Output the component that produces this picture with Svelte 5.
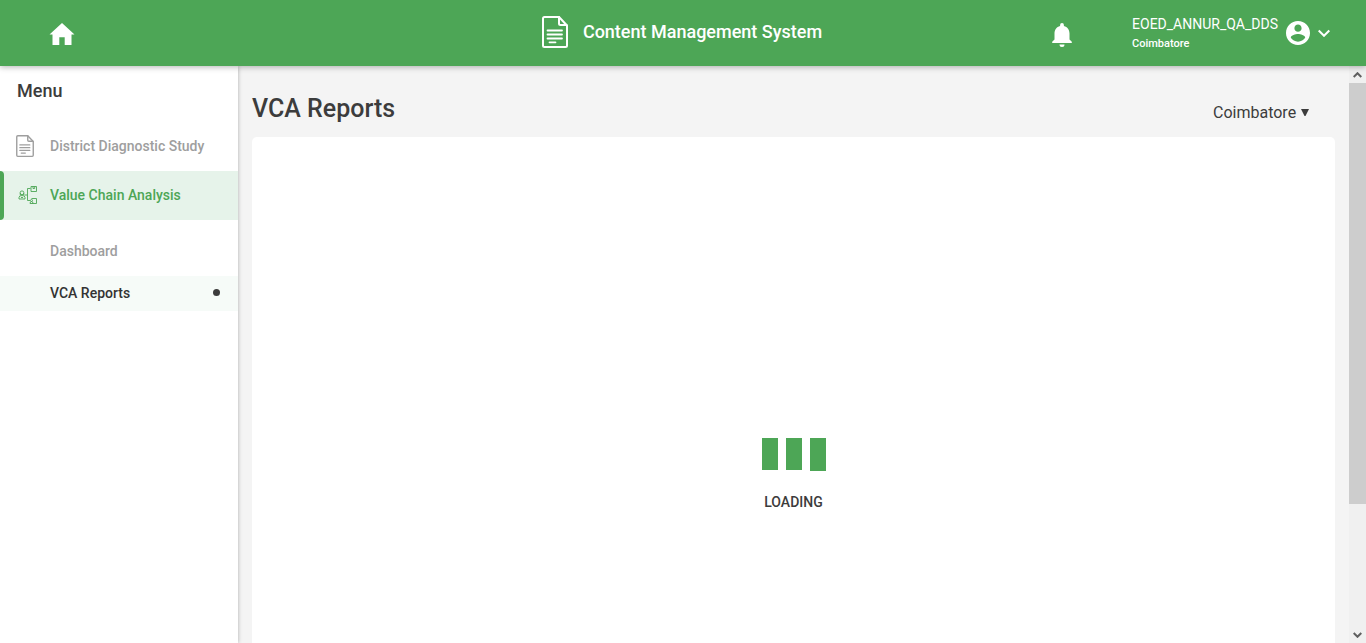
<script>
  let district = $state('Coimbatore');
  const links = [
    { label: 'Dashboard', active: false },
    { label: 'VCA Reports', active: true }
  ];
</script>

{#snippet documentIcon()}
  <svg class="doc" viewBox="0 0 26 32" fill="none" stroke="currentColor" stroke-width="2" stroke-linejoin="round" stroke-linecap="round" aria-hidden="true">
    <path d="M2.500 1H17L25 9.500V29.500Q25 31 23.500 31H2.500Q1 31 1 29.500V2.500Q1 1 2.500 1Z" />
    <path d="M17 1V7.500Q17 9 18.500 9H24.500" />
    <path d="M5.500 14.500H20M5.500 18.500H20M5.500 22.500H20M7.500 26.300H13.500" stroke-width="1.800" />
  </svg>
{/snippet}

<div class="page">
  <header>
    <a class="home" href="#home" aria-label="Home">
      <svg viewBox="0 0 26 22" fill="currentColor" aria-hidden="true"><path d="M13 0L0.500 11.500H3.500V22H10.300V14.200H15.700V22H22.500V11.500H25.500Z" /></svg>
    </a>
    <div class="brand">
      {@render documentIcon()}
      <span>Content Management System</span>
    </div>
    <div class="account">
      <button class="bell" aria-label="Notifications">
        <svg viewBox="0 0 20 24" fill="currentColor" aria-hidden="true"><path d="M10 24a2.500 2.500 0 0 0 2.500-2.500h-5A2.500 2.500 0 0 0 10 24ZM17.500 16.500V10.500c0-3.700-2-6.700-5.600-7.600V2a1.900 1.900 0 0 0-3.800 0v.9C4.500 3.800 2.500 6.800 2.500 10.500v6L.2 18.800V20h19.600v-1.200Z" /></svg>
      </button>
      <button class="user">
        <span class="names"><span class="name">EOED_ANNUR_QA_DDS</span><span class="place">Coimbatore</span></span>
        <svg class="avatar" viewBox="2 2 20 20" fill="currentColor" aria-hidden="true"><path d="M12 2C6.480 2 2 6.480 2 12s4.480 10 10 10 10-4.480 10-10S17.520 2 12 2zm0 3c1.660 0 3 1.340 3 3s-1.340 3-3 3-3-1.340-3-3 1.340-3 3-3zm0 14.200c-2.500 0-4.710-1.280-6-3.220.030-1.990 4-3.080 6-3.080 1.990 0 5.970 1.090 6 3.080-1.290 1.940-3.500 3.220-6 3.220z" /></svg>
        <svg class="chevron" viewBox="0 0 12 8" fill="none" stroke="currentColor" stroke-width="2" aria-hidden="true"><path d="M.7 1.500L6 6.800L11.300 1.500" /></svg>
      </button>
    </div>
  </header>

  <div class="body">
    <aside>
      <h2>Menu</h2>
      <nav>
        <a class="item" href="#district">{@render documentIcon()}<span>District Diagnostic Study</span></a>
        <a class="item current" href="#chain">
          <svg class="chain" viewBox="0 0 20 20" fill="none" stroke="currentColor" stroke-width="0.900" aria-hidden="true">
            <circle cx="4" cy="7.800" r="1.900" />
            <path d="M1 14v-1.500q0-2 3-2t3 2V14ZM2.300 10.300V8M5.700 10.300V8M3 12.500h2" />
            <path d="M6.500 10H9.500M12.500 3.500H9.500V15.500H12" />
            <path d="M13 1.500h5.500V6.500H13ZM15 1.500v2h1.700v-2" />
            <path d="M13.500 13.500h5V18.500h-4" />
            <circle cx="13.500" cy="15.500" r="1" />
            <path d="M12 18.500q0-2 1.500-2t1.500 2Z" />
          </svg>
          <span>Value Chain Analysis</span>
        </a>
        <div class="sub">
          {#each links as link}
            <a class:active={link.active} href="#{link.label}">{link.label}{#if link.active}<i></i>{/if}</a>
          {/each}
        </div>
      </nav>
    </aside>

    <main>
      <div class="heading">
        <h1>VCA Reports</h1>
        <label>
          <select bind:value={district} aria-label="District"><option>Coimbatore</option></select>
          <svg viewBox="0 0 8 7" fill="currentColor" aria-hidden="true"><path d="M0 0H8L4.500 7H3.500Z" /></svg>
        </label>
      </div>
      <section>
        <div class="bars"><i></i><i></i><i></i></div>
        <p>LOADING</p>
      </section>
    </main>

    <div class="scroll">
      <button aria-label="Scroll up"><svg viewBox="0 0 9 6" fill="none" stroke="currentColor" stroke-width="2"><path d="M.7 5L4.500 1.200L8.300 5" /></svg></button>
      <div class="track"><div class="thumb"></div></div>
      <button aria-label="Scroll down"><svg viewBox="0 0 9 6" fill="none" stroke="currentColor" stroke-width="2"><path d="M.7 1L4.500 4.800L8.300 1" /></svg></button>
    </div>
  </div>
</div>

<style>
  :global(body) { font-family: Roboto, "Liberation Sans", sans-serif; color: #3c3c3c; }
  * { box-sizing: border-box; }
  svg { display: block; flex: none; }
  a { color: inherit; text-decoration: none; }
  button { font: inherit; color: inherit; background: none; border: 0; padding: 0; cursor: pointer; }
  h1, h2, p { margin: 0; font-weight: 500; }

  .page { height: 100vh; display: flex; flex-direction: column; overflow: hidden; background: #f4f4f4; }
  header {
    flex: none; height: 66px; display: grid; grid-template-columns: 1fr auto 1fr; align-items: center;
    background: #4da656; color: #fff; z-index: 2; box-shadow: 0 1px 6px rgba(0, 0, 0, 0.3);
  }
  .home { justify-self: start; margin-left: 49px; padding-top: 2px; }
  .home svg { width: 26px; height: 22px; }
  .brand { display: flex; align-items: center; gap: 15px; padding: 0 2px 2px 0; font-size: 18px; line-height: 24px; font-weight: 500; }
  .doc { width: 26px; height: 32px; }
  .account { justify-self: end; display: flex; align-items: center; gap: 60px; padding-right: 36px; }
  .bell { padding-top: 4px; }
  .bell svg { width: 20px; height: 24px; }
  .user { display: flex; align-items: center; gap: 8px; text-align: left; }
  .names { display: flex; flex-direction: column; }
  .name { font-size: 14px; line-height: 20px; }
  .place { font-size: 11px; line-height: 20px; font-weight: 500; }
  .names { padding-top: 2px; }
  .avatar { width: 24px; height: 24px; }
  .chevron { width: 12px; height: 8px; }

  .body { flex: 1; min-height: 0; display: flex; }
  aside { flex: none; width: 238px; background: #fff; box-shadow: 0 0 4px rgba(0, 0, 0, 0.3); }
  h2 { font-size: 18px; line-height: 24px; padding: 13px 17px 19px; }
  .item { display: flex; align-items: center; gap: 16px; height: 49px; padding: 0 0 2px 16px; font-size: 14px; font-weight: 500; color: #9e9e9e; }
  .item .doc { width: 18px; height: 22px; }
  .current { position: relative; gap: 12px; color: #4da656; background: #e6f3ea; }
  .current::before { content: ""; position: absolute; inset: 0 auto 0 0; width: 4px; border-radius: 0 4px 4px 0; background: #4da656; }
  .item .chain { width: 20px; height: 20px; margin-left: 2px; }
  .sub { display: flex; flex-direction: column; gap: 7px; padding-top: 14px; }
  .sub a { display: flex; align-items: center; justify-content: space-between; height: 35px; padding: 0 18px 2px 50px; font-size: 14px; font-weight: 500; color: #9e9e9e; }
  .sub .active { color: #333; background: #f6fbf8; }
  .sub i { width: 7px; height: 7px; border-radius: 50%; background: #3c3c3c; }

  main { flex: 1; min-width: 0; display: flex; flex-direction: column; padding: 25px 14px 0; }
  .heading { display: flex; align-items: center; justify-content: space-between; padding: 0 26px 10px 0; }
  h1 { font-size: 25px; line-height: 36px; }
  label { display: flex; align-items: center; gap: 4px; padding-top: 7px; }
  select { appearance: none; border: 0; padding: 0; background: none; font: inherit; font-size: 16px; line-height: 24px; color: inherit; }
  label svg { width: 8px; height: 7px; }
  section { flex: 1; background: #fff; border-radius: 5px 5px 0 0; display: flex; flex-direction: column; align-items: center; justify-content: flex-end; padding-bottom: 131px; gap: 21px; }
  .bars { display: flex; gap: 8px; }
  .bars i { width: 16px; height: 32px; background: #4da656; }
  .bars i:last-child { height: 33px; }
  section p { font-size: 14px; line-height: 20px; }

  .scroll { flex: none; width: 17px; display: flex; flex-direction: column; background: #f0f0f0; color: #606060; }
  .scroll button { height: 17px; display: grid; place-items: center; }
  .scroll svg { width: 9px; height: 6px; }
  .track { flex: 1; }
  .thumb { height: 77.5%; background: #cdcdcd; }
</style>
